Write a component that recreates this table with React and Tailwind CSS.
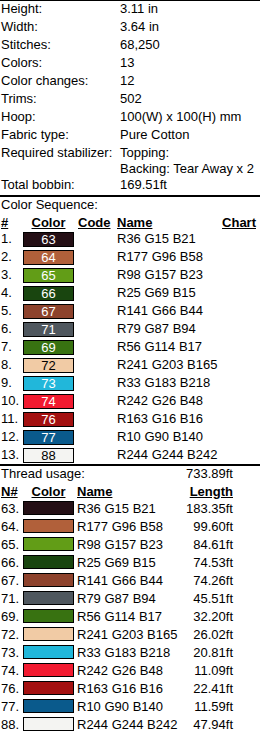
const threads = [
  { n: 63, r: 36, g: 15, b: 21, len: "183.35ft" },
  { n: 64, r: 177, g: 96, b: 58, len: "99.60ft" },
  { n: 65, r: 98, g: 157, b: 23, len: "84.61ft" },
  { n: 66, r: 25, g: 69, b: 15, len: "74.53ft" },
  { n: 67, r: 141, g: 66, b: 44, len: "74.26ft" },
  { n: 71, r: 79, g: 87, b: 94, len: "45.51ft" },
  { n: 69, r: 56, g: 114, b: 17, len: "32.20ft" },
  { n: 72, r: 241, g: 203, b: 165, len: "26.02ft", dark: true },
  { n: 73, r: 33, g: 183, b: 218, len: "20.81ft" },
  { n: 74, r: 242, g: 26, b: 48, len: "11.09ft" },
  { n: 76, r: 163, g: 16, b: 16, len: "22.41ft" },
  { n: 77, r: 10, g: 90, b: 140, len: "11.59ft" },
  { n: 88, r: 244, g: 244, b: 242, len: "47.94ft", dark: true },
];

const info = [
  ["Height:", "3.11 in"],
  ["Width:", "3.64 in"],
  ["Stitches:", "68,250"],
  ["Colors:", "13"],
  ["Color changes:", "12"],
  ["Trims:", "502"],
  ["Hoop:", "100(W) x 100(H) mm"],
  ["Fabric type:", "Pure Cotton"],
];

const rgb = (t) => `R${t.r} G${t.g} B${t.b}`;
const bg = (t) => ({ backgroundColor: `rgb(${t.r},${t.g},${t.b})` });

const App = () => {
  return (
    <div className="w-[260px] bg-white text-black text-[13px] leading-[16px] font-['Liberation_Sans',Arial,sans-serif]">
      <div className="h-[1px] bg-black" />

      {/* summary */}
      {info.map(([k, v]) => (
        <div key={k} className="flex h-[18px]">
          <div className="w-[120px] pl-[1px]">{k}</div>
          <div>{v}</div>
        </div>
      ))}
      <div className="flex h-[32px]">
        <div className="w-[120px] pl-[1px]">Required stabilizer:</div>
        <div>
          Topping:
          <br />
          Backing: Tear Away x 2
        </div>
      </div>
      <div className="flex h-[18px]">
        <div className="w-[120px] pl-[1px]">Total bobbin:</div>
        <div>169.51ft</div>
      </div>

      <div className="h-[2px] bg-black" />

      {/* color sequence */}
      <div className="h-[18px] pl-[1px]">Color Sequence:</div>
      <div className="flex h-[15px] font-bold underline">
        <div className="w-[23px] pl-[1px]">#</div>
        <div className="w-[51px] text-center">Color</div>
        <div className="w-[4px]" />
        <div className="w-[39px]">Code</div>
        <div className="flex-1">Name</div>
        <div className="pr-[4px]">Chart</div>
      </div>
      {threads.map((t, i) => (
        <div key={t.n} className="flex items-start h-[18px] pt-[1px]">
          <div className="w-[23px] pl-[1px]">{i + 1}.</div>
          <div
            className={`w-[51px] h-[15px] mt-[1px] border border-black text-center leading-[13px] ${t.dark ? "text-black" : "text-white"}`}
            style={bg(t)}
          >
            {t.n}
          </div>
          <div className="w-[43px]" />
          <div>{rgb(t)}</div>
        </div>
      ))}

      <div className="h-[2px] bg-black" />

      {/* thread usage */}
      <div className="w-[233px] flex justify-between h-[17px] pl-[1px]">
        <span>Thread usage:</span>
        <span>733.89ft</span>
      </div>
      <div className="w-[233px] flex h-[17px] pt-[1px] font-bold underline">
        <div className="w-[23px] pl-[1px]">N#</div>
        <div className="w-[51px] text-center">Color</div>
        <div className="w-[3px]" />
        <div className="flex-1">Name</div>
        <div>Length</div>
      </div>
      {threads.map((t) => (
        <div key={t.n} className="w-[233px] flex items-start h-[18px] pt-[1px]">
          <div className="w-[23px] pl-[1px]">{t.n}.</div>
          <div className="w-[51px] h-[14px] border border-black" style={bg(t)} />
          <div className="w-[3px]" />
          <div className="flex-1">{rgb(t)}</div>
          <div className="text-right">{t.len}</div>
        </div>
      ))}
    </div>
  );
};

export default App;
